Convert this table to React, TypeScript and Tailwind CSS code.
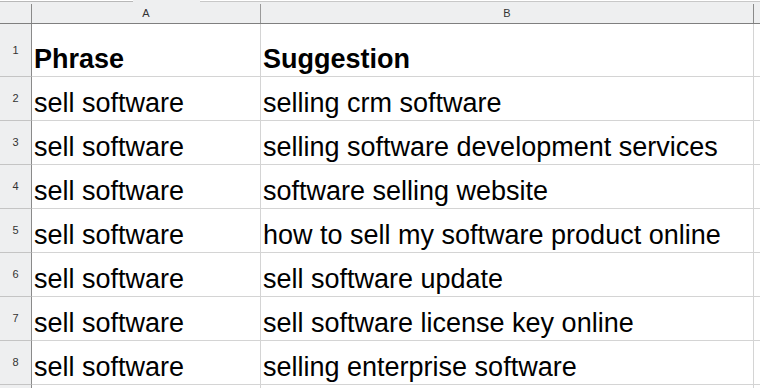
const rows: [string, string][] = [
  ['sell software', 'selling crm software'],
  ['sell software', 'selling software development services'],
  ['sell software', 'software selling website'],
  ['sell software', 'how to sell my software product online'],
  ['sell software', 'sell software update'],
  ['sell software', 'sell software license key online'],
  ['sell software', 'selling enterprise software'],
];

function RowHead({ n, h }: { n?: number; h: string }) {
  return (
    <div
      className={`${h} w-[32px] shrink-0 flex items-center justify-center bg-[#eeeff0] border-r border-r-[#8a8a8a] border-b border-b-[#c4c4c4] text-[11px] text-[#333]`}
    >
      {n}
    </div>
  );
}

function Cell({ text, w, bold, h }: { text: string; w: string; bold?: boolean; h: string }) {
  return (
    <div
      className={`${h} ${w} shrink-0 flex items-end pl-[2px] pb-[2px] border-r border-b border-[#d4d4d4] overflow-hidden whitespace-nowrap text-[27px] leading-[30px] text-black ${bold ? 'font-bold' : ''}`}
    >
      {text}
    </div>
  );
}

export default function App() {
  return (
    <div
      className="w-[760px] h-[388px] overflow-hidden bg-white"
      style={{ fontFamily: '"Liberation Sans", Arial, sans-serif' }}
    >
      {/* formula bar remnant */}
      <div className="h-[4px] flex bg-[#eeeff0]">
        <div className="w-[133px] h-[2px] bg-white border-b border-[#b8b8b8]" />
        <div className="w-[67px]" />
        <div className="flex-1 h-[2px] bg-white border-b border-[#c8c8c8]" />
      </div>

      {/* column headers */}
      <div className="flex h-[20px] bg-[#eeeff0] border-b border-[#7f7f7f] text-[11px] text-[#333]">
        <div className="w-[32px] shrink-0 border-r border-[#8a8a8a]" />
        <div className="w-[229px] shrink-0 flex items-center justify-center border-r border-[#9a9a9a]">A</div>
        <div className="w-[493px] shrink-0 flex items-center justify-center border-r border-[#8a8a8a]">B</div>
        <div className="flex-1" />
      </div>

      {/* row 1 */}
      <div className="flex">
        <RowHead n={1} h="h-[53px]" />
        <Cell h="h-[53px]" w="w-[229px]" text="Phrase" bold />
        <Cell h="h-[53px]" w="w-[493px]" text="Suggestion" bold />
        <div className="flex-1 h-[53px] border-b border-[#d4d4d4]" />
      </div>

      {rows.map(([a, b], i) => (
        <div key={i} className="flex">
          <RowHead n={i + 2} h="h-[44px]" />
          <Cell h="h-[44px]" w="w-[229px]" text={a} />
          <Cell h="h-[44px]" w="w-[493px]" text={b} />
          <div className="flex-1 h-[44px] border-b border-[#d4d4d4]" />
        </div>
      ))}

      <div className="flex">
        <RowHead h="h-[44px]" />
        <Cell h="h-[44px]" w="w-[229px]" text="" />
        <Cell h="h-[44px]" w="w-[493px]" text="" />
      </div>
    </div>
  );
}
